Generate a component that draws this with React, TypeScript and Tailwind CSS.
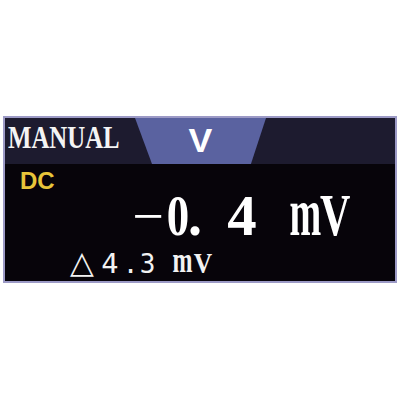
import React from "react";

const serif = { fontFamily: '"Liberation Serif", "Times New Roman", serif' };
const sans = { fontFamily: '"Liberation Sans", Arial, sans-serif' };
const mono = { fontFamily: '"DejaVu Sans Mono", monospace' };
const sym = { fontFamily: '"DejaVu Sans", sans-serif' };

function G({ children, cls }: { children: React.ReactNode; cls: string }) {
  return <div className={"w-0 flex justify-center " + cls}>{children}</div>;
}

export default function App() {
  return (
    <div className="w-[400px] h-[400px] bg-white pt-[116px] pl-[3px]">
      <div className="w-[394px] h-[167px] border-2 border-[#9c9ac6] flex flex-col bg-[#07040a]">
        {/* header */}
        <div className="h-[46px] flex items-start bg-[#1d1b2f]">
          <div className="w-[130px] h-full pt-[4px] pl-[3px]">
            <div
              className="text-[31px] leading-[31px] font-bold text-[#f4f4f4] scale-x-[0.8] origin-left whitespace-nowrap"
              style={serif}
            >
              MANUAL
            </div>
          </div>
          <div className="w-[131px] h-full bg-[#5a62a0] [clip-path:polygon(0_0,100%_0,88.5%_100%,13%_100%)] flex justify-center pt-[5px]">
            <span className="text-[34px] leading-[34px] font-bold text-white scale-x-[1.05]" style={sans}>
              V
            </span>
          </div>
        </div>
        {/* body */}
        <div className="flex-1 flex flex-col pt-[5px]">
          <div className="pl-[15px] text-[24px] leading-[24px] font-bold text-[#e8c53a]" style={sans}>
            DC
          </div>
          <div
            className="mt-[3px] flex items-baseline pl-[143px] text-[56px] leading-[40px] text-white whitespace-nowrap"
            style={serif}
          >
            <G cls="">
              <span>−</span>
            </G>
            <G cls="ml-[29.5px]">
              <span className="font-bold scale-x-[0.8] inline-block">0</span>
            </G>
            <G cls="ml-[17.5px]">
              <span className="font-bold">.</span>
            </G>
            <G cls="ml-[47px]">
              <span className="font-bold scale-x-[1.05] inline-block">4</span>
            </G>
            <G cls="ml-[63px]">
              <span className="font-bold scale-x-[0.68] scale-y-[1.22] origin-bottom inline-block">m</span>
            </G>
            <G cls="ml-[30px]">
              <span className="font-bold scale-x-[0.75] scale-y-[1.05] origin-bottom inline-block">V</span>
            </G>
          </div>
          <div
            className="mt-[13px] flex items-baseline pl-[77px] text-[26px] leading-[26px] text-[#f2f2f2] whitespace-nowrap"
            style={mono}
          >
            <G cls="">
              <span className="text-[31px] leading-[26px]" style={sym}>
                △
              </span>
            </G>
            <G cls="ml-[27.5px]">
              <span className="scale-x-[1.1] inline-block">4</span>
            </G>
            <G cls="ml-[21px]">
              <span>.</span>
            </G>
            <G cls="ml-[17px]">
              <span>3</span>
            </G>
            <G cls="ml-[35px]">
              <span
                className="text-[30px] font-bold scale-x-[0.8] scale-y-[1.2] origin-bottom inline-block"
                style={serif}
              >
                m
              </span>
            </G>
            <G cls="ml-[20px]">
              <span className="text-[30px] font-bold scale-x-[0.85] inline-block" style={serif}>
                V
              </span>
            </G>
          </div>
        </div>
      </div>
    </div>
  );
}
